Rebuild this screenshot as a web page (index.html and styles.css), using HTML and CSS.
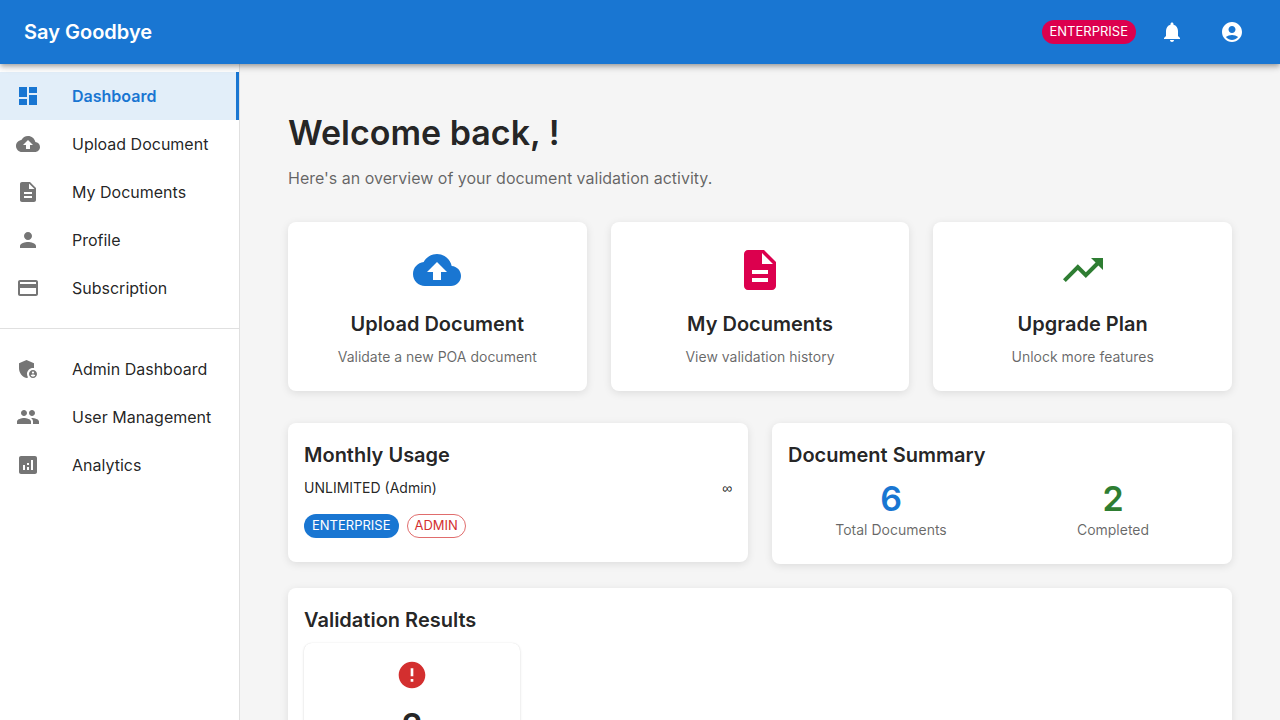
FILE: index.html
```html
<!DOCTYPE html>
<html lang="en">
<head>
<meta charset="utf-8">
<title>Say Goodbye</title>
<link rel="stylesheet" href="styles.css">
</head>
<body>
<svg class="sprite" aria-hidden="true">
  <symbol id="dashboard" viewBox="0 0 24 24"><path d="M3 13h8V3H3v10zm0 8h8v-6H3v6zm10 0h8V11h-8v10zm0-18v6h8V3h-8z"/></symbol>
  <symbol id="upload" viewBox="0 0 24 24"><path d="M19.35 10.04C18.67 6.59 15.64 4 12 4 9.11 4 6.6 5.64 5.35 8.04 2.34 8.36 0 10.91 0 14c0 3.31 2.69 6 6 6h13c2.76 0 5-2.24 5-5 0-2.64-2.05-4.78-4.65-4.96zM14 13v4h-4v-4H7l5-5 5 5h-3z"/></symbol>
  <symbol id="description" viewBox="0 0 24 24"><path d="M14 2H6c-1.1 0-1.99.9-1.99 2L4 20c0 1.1.89 2 1.99 2H18c1.1 0 2-.9 2-2V8l-6-6zm2 16H8v-2h8v2zm0-4H8v-2h8v2zm-3-5V3.500L18.500 9H13z"/></symbol>
  <symbol id="person" viewBox="0 0 24 24"><path d="M12 12c2.210 0 4-1.790 4-4s-1.790-4-4-4-4 1.790-4 4 1.790 4 4 4zm0 2c-2.670 0-8 1.340-8 4v2h16v-2c0-2.660-5.330-4-8-4z"/></symbol>
  <symbol id="payment" viewBox="0 0 24 24"><path d="M20 4H4c-1.110 0-1.990.89-1.990 2L2 18c0 1.110.89 2 2 2h16c1.110 0 2-.89 2-2V6c0-1.110-.89-2-2-2zm0 14H4v-6h16v6zm0-10H4V6h16v2z"/></symbol>
  <symbol id="admin" viewBox="0 0 24 24"><path d="M17 11c.34 0 .67.04 1 .09V6.270L10.500 3 3 6.270v4.910c0 4.540 3.200 8.790 7.500 9.820.55-.13 1.080-.32 1.600-.55-.69-.98-1.100-2.170-1.100-3.450 0-3.310 2.690-6 6-6z"/><path d="M17 13c-2.210 0-4 1.790-4 4s1.790 4 4 4 4-1.790 4-4-1.790-4-4-4zm0 1.380c.62 0 1.120.51 1.120 1.120s-.51 1.120-1.120 1.120-1.120-.51-1.120-1.120.5-1.120 1.120-1.120zm0 5.370c-.93 0-1.740-.46-2.240-1.170.05-.72 1.510-1.080 2.240-1.080s2.190.36 2.240 1.080c-.5.71-1.310 1.170-2.240 1.170z"/></symbol>
  <symbol id="people" viewBox="0 0 24 24"><path d="M16 11c1.660 0 2.990-1.340 2.990-3S17.660 5 16 5c-1.660 0-3 1.340-3 3s1.340 3 3 3zm-8 0c1.660 0 2.990-1.340 2.990-3S9.660 5 8 5C6.340 5 5 6.340 5 8s1.340 3 3 3zm0 2c-2.330 0-7 1.170-7 3.500V19h14v-2.500c0-2.330-4.670-3.500-7-3.500zm8 0c-.29 0-.62.02-.97.05 1.160.84 1.970 1.970 1.970 3.450V19h6v-2.500c0-2.330-4.670-3.500-7-3.500z"/></symbol>
  <symbol id="analytics" viewBox="0 0 24 24"><path d="M19 3H5c-1.100 0-2 .9-2 2v14c0 1.100.9 2 2 2h14c1.100 0 2-.9 2-2V5c0-1.100-.9-2-2-2zM9 17H7v-5h2v5zm4 0h-2v-3h2v3zm0-5h-2v-2h2v2zm4 5h-2V7h2v10z"/></symbol>
  <symbol id="bell" viewBox="0 0 24 24"><path d="M12 22c1.100 0 2-.9 2-2h-4c0 1.100.89 2 2 2zm6-6v-5c0-3.070-1.640-5.640-4.500-6.320V4c0-.83-.67-1.500-1.500-1.500s-1.500.67-1.500 1.500v.68C7.630 5.360 6 7.920 6 11v5l-2 2v1h16v-1l-2-2z"/></symbol>
  <symbol id="account" viewBox="0 0 24 24"><path d="M12 2C6.480 2 2 6.480 2 12s4.480 10 10 10 10-4.480 10-10S17.520 2 12 2zm0 4c1.930 0 3.500 1.570 3.500 3.500S13.930 13 12 13s-3.500-1.570-3.500-3.500S10.070 6 12 6zm0 14c-2.030 0-4.430-.82-6.140-2.880C7.550 15.800 9.680 15 12 15s4.450.8 6.140 2.120C16.430 19.180 14.030 20 12 20z"/></symbol>
  <symbol id="trending" viewBox="0 0 24 24"><path d="m16 6 2.290 2.290-4.880 4.880-4-4L2 16.590 3.410 18l6-6 4 4 6.300-6.290L22 12V6z"/></symbol>
  <symbol id="error" viewBox="0 0 24 24"><path d="M12 2C6.480 2 2 6.480 2 12s4.480 10 10 10 10-4.480 10-10S17.520 2 12 2zm1 15h-2v-2h2v2zm0-4h-2V7h2v6z"/></symbol>
</svg>

<header class="appbar">
  <div class="brand">Say Goodbye</div>
  <span class="chip chip-secondary">ENTERPRISE</span>
  <button class="icon-button" aria-label="Notifications"><svg class="icon"><use href="#bell"/></svg></button>
  <button class="icon-button" aria-label="Account"><svg class="icon"><use href="#account"/></svg></button>
</header>

<div class="layout">
  <nav class="sidebar">
    <ul class="nav-list">
      <li class="nav-item selected"><svg class="icon"><use href="#dashboard"/></svg>Dashboard</li>
      <li class="nav-item"><svg class="icon"><use href="#upload"/></svg>Upload Document</li>
      <li class="nav-item"><svg class="icon"><use href="#description"/></svg>My Documents</li>
      <li class="nav-item"><svg class="icon"><use href="#person"/></svg>Profile</li>
      <li class="nav-item"><svg class="icon"><use href="#payment"/></svg>Subscription</li>
    </ul>
    <hr class="divider">
    <ul class="nav-list">
      <li class="nav-item"><svg class="icon"><use href="#admin"/></svg>Admin Dashboard</li>
      <li class="nav-item"><svg class="icon"><use href="#people"/></svg>User Management</li>
      <li class="nav-item"><svg class="icon"><use href="#analytics"/></svg>Analytics</li>
    </ul>
  </nav>

  <main class="content">
    <h1 class="headline">Welcome back, !</h1>
    <p class="intro">Here's an overview of your document validation activity.</p>

    <section class="actions">
      <article class="card action">
        <svg class="action-icon primary"><use href="#upload"/></svg>
        <h2 class="title">Upload Document</h2>
        <p class="caption">Validate a new POA document</p>
      </article>
      <article class="card action">
        <svg class="action-icon secondary"><use href="#description"/></svg>
        <h2 class="title">My Documents</h2>
        <p class="caption">View validation history</p>
      </article>
      <article class="card action">
        <svg class="action-icon success"><use href="#trending"/></svg>
        <h2 class="title">Upgrade Plan</h2>
        <p class="caption">Unlock more features</p>
      </article>
    </section>

    <section class="overview">
      <article class="card panel">
        <h2 class="title">Monthly Usage</h2>
        <div class="usage"><span>UNLIMITED (Admin)</span><span class="limit">∞</span></div>
        <div class="chips">
          <span class="chip chip-primary">ENTERPRISE</span>
          <span class="chip chip-outlined">ADMIN</span>
        </div>
      </article>
      <article class="card panel">
        <h2 class="title">Document Summary</h2>
        <div class="stats">
          <div class="stat"><div class="figure primary">6</div><p class="caption">Total Documents</p></div>
          <div class="stat"><div class="figure success">2</div><p class="caption">Completed</p></div>
        </div>
      </article>
    </section>

    <section class="card panel">
      <h2 class="title">Validation Results</h2>
      <div class="results">
        <div class="result">
          <svg class="result-icon"><use href="#error"/></svg>
          <div class="figure">2</div>
        </div>
      </div>
    </section>
  </main>
</div>
</body>
</html>
```

FILE: styles.css
```css
* { box-sizing: border-box; }

body {
  margin: 0;
  height: 100vh;
  overflow: hidden;
  display: flex;
  flex-direction: column;
  background: #f5f5f5;
  color: rgba(0, 0, 0, 0.87);
  font: 400 16px/1.5 Inter, Roboto, sans-serif;
  -webkit-font-smoothing: antialiased;
}

h1, h2, p, ul { margin: 0; padding: 0; }
.sprite { display: none; }
.icon { width: 24px; height: 24px; fill: currentColor; flex: none; }

.appbar {
  position: relative;
  z-index: 2;
  flex: none;
  display: flex;
  align-items: center;
  height: 64px;
  padding: 0 24px;
  background: #1976d2;
  color: #fff;
  box-shadow: 0 2px 4px -1px rgba(0, 0, 0, 0.2), 0 4px 5px rgba(0, 0, 0, 0.14), 0 1px 10px rgba(0, 0, 0, 0.12);
}
.brand {
  flex: 1;
  font-size: 20px;
  font-weight: 600;
  line-height: 1.6;
}
.icon-button {
  display: flex;
  align-items: center;
  justify-content: center;
  width: 48px;
  height: 48px;
  margin-left: 12px;
  padding: 0;
  border: 0;
  border-radius: 50%;
  background: none;
  color: inherit;
}

.chip {
  display: inline-flex;
  align-items: center;
  height: 24px;
  padding: 0 8px;
  border-radius: 16px;
  font-size: 13px;
  line-height: 19.5px;
  color: #fff;
}
.chip-primary { background: #1976d2; }
.chip-secondary { background: #dc004e; }
.chip-outlined { padding: 0 7px; border: 1px solid rgba(211, 47, 47, 0.7); color: #d32f2f; }

.layout { flex: 1; display: flex; min-height: 0; }
.sidebar {
  flex: none;
  width: 240px;
  border-right: 1px solid rgba(0, 0, 0, 0.12);
  background: #fff;
}
.nav-list { padding: 8px 0; list-style: none; }
.nav-item {
  display: flex;
  align-items: center;
  gap: 32px;
  height: 48px;
  padding: 0 16px;
  white-space: nowrap;
}
.nav-item .icon { color: #757575; }
.nav-item.selected {
  border-right: 3px solid #1976d2;
  background: #e2eef9;
  color: #1976d2;
  font-weight: 600;
}
.nav-item.selected .icon { color: inherit; }
.divider { margin: 8px 0; border: 0; border-top: 1px solid rgba(0, 0, 0, 0.12); }

.content { flex: 1; min-width: 0; padding: 48px; overflow: hidden; }
.headline {
  margin-bottom: 0.35em;
  font-size: 34px;
  font-weight: 600;
  line-height: 1.235;
}
.intro { margin-bottom: 32px; color: rgba(0, 0, 0, 0.6); }

.card {
  border-radius: 8px;
  background: #fff;
  box-shadow: 0 2px 8px rgba(0, 0, 0, 0.1);
}
.title {
  margin-bottom: 7px;
  font-size: 20px;
  font-weight: 600;
  line-height: 1.6;
}
.caption {
  color: rgba(0, 0, 0, 0.6);
  font-size: 14px;
  line-height: 1.43;
}
.primary { color: #1976d2; }
.secondary { color: #dc004e; }
.success { color: #2e7d32; }

.actions {
  display: grid;
  grid-template-columns: repeat(3, 1fr);
  gap: 24px;
  margin-bottom: 32px;
}
.action { padding: 24px; text-align: center; }
.action-icon { display: block; width: 48px; height: 48px; margin: 0 auto 14px; fill: currentColor; }

.overview {
  display: grid;
  grid-template-columns: repeat(2, 1fr);
  align-items: start;
  gap: 24px;
  margin-bottom: 24px;
}
.panel { padding: 16px 16px 24px; }
.usage {
  display: flex;
  justify-content: space-between;
  height: 20px;
  margin-bottom: 16px;
  font-size: 14px;
  line-height: 1.43;
}
.limit { font-family: "Liberation Sans", sans-serif; }
.chips { display: flex; gap: 8px; }
.stats { display: grid; grid-template-columns: repeat(2, 1fr); gap: 16px; }
.stat { text-align: center; }
.figure { font-size: 34px; font-weight: 600; line-height: 1.235; }

.results { display: grid; grid-template-columns: repeat(4, 1fr); gap: 16px; }
.result {
  padding: 16px;
  border-radius: 8px;
  text-align: center;
  box-shadow: 0 1px 3px rgba(0, 0, 0, 0.12), 0 0 1px rgba(0, 0, 0, 0.12);
}
.result-icon { display: block; width: 32px; height: 32px; margin: 0 auto 14px; fill: #d32f2f; }
```
